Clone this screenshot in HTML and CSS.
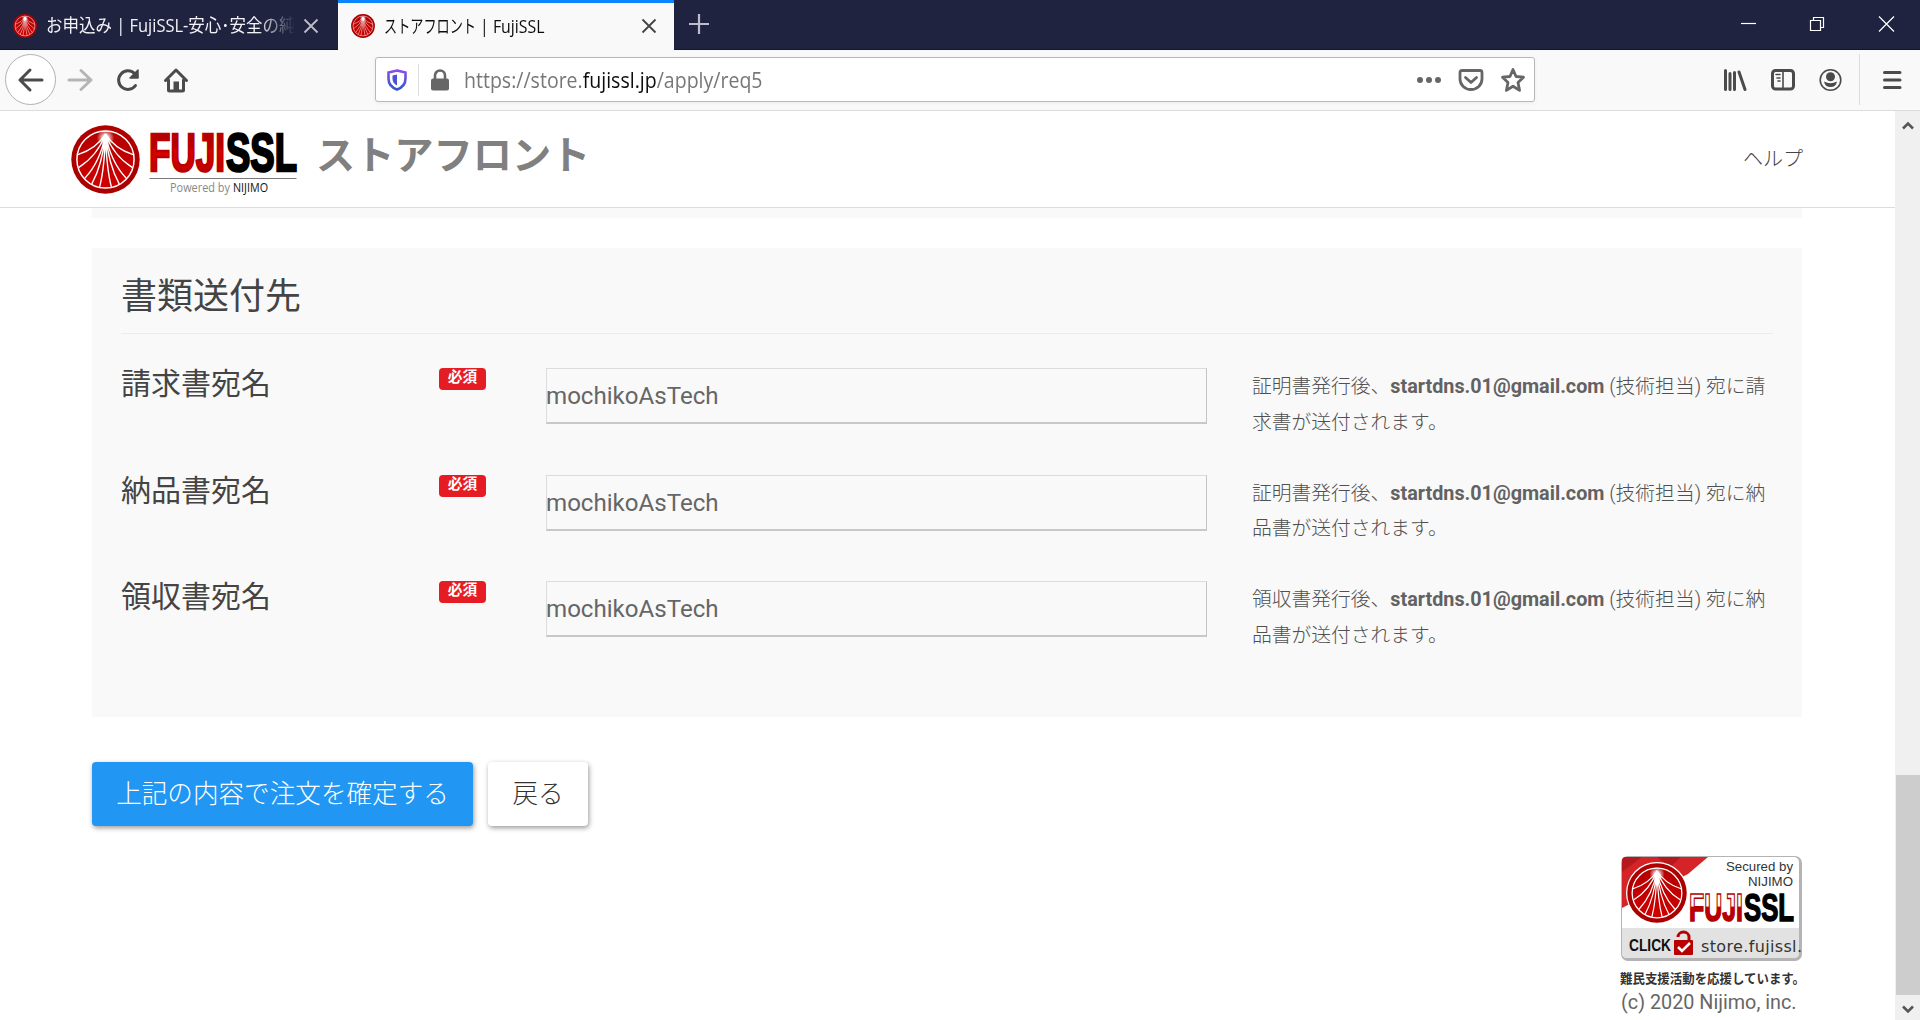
FILE: index.html
```html
<!DOCTYPE html>
<html lang="ja">
<head>
<meta charset="utf-8">
<title>ストアフロント | FujiSSL</title>
<link rel="stylesheet" href="styles.css">
</head>
<body>
<svg class="defs" width="0" height="0">
  <defs>
    <linearGradient id="red" x1="0" y1="0" x2="0" y2="1"><stop offset="0" stop-color="#b00000"/><stop offset="1" stop-color="#a80000"/></linearGradient>
    <linearGradient id="inner" x1="0" y1="0" x2="0" y2="1"><stop offset="0" stop-color="#b40000"/><stop offset="1" stop-color="#d00000"/></linearGradient>
    <linearGradient id="fuji" x1="0" y1="0" x2="0" y2="1"><stop offset="0" stop-color="#b00000"/><stop offset=".42" stop-color="#b80000"/><stop offset=".48" stop-color="#dc0000"/><stop offset="1" stop-color="#b40000"/></linearGradient>
    <linearGradient id="fujis" x1="0" y1="0" x2="0" y2="1"><stop offset="0" stop-color="#fff"/><stop offset=".46" stop-color="#fff"/><stop offset=".47" stop-color="#c00000"/><stop offset="1" stop-color="#b00000"/></linearGradient>
    <linearGradient id="shield" x1="0" y1="0" x2="0" y2="1"><stop offset="0" stop-color="#8a4de8"/><stop offset="1" stop-color="#2f57cf"/></linearGradient>
    <radialGradient id="glow"><stop offset="0" stop-color="#fff"/><stop offset=".3" stop-color="#fff" stop-opacity=".8"/><stop offset="1" stop-color="#fff" stop-opacity="0"/></radialGradient>
    <symbol id="emblem" viewBox="0 0 70 70">
      <circle cx="35" cy="35" r="34.700" fill="url(#red)"/>
      <circle cx="35" cy="35" r="29" fill="url(#inner)" stroke="#fff" stroke-width="1.500"/>
      <g fill="none" stroke="#fff" stroke-width="1.400">
        <path d="M35 9Q26 24 7 30M35 9Q27 31 8 43M35 9Q30 37 14 54M35 9Q32 40 21 60M35 9Q34 44 29 63M35 9Q44 24 63 30M35 9Q43 31 62 43M35 9Q40 37 56 54M35 9Q38 40 49 60M35 9Q36 44 41 63"/>
      </g>
      <circle cx="35" cy="13" r="9" fill="url(#glow)"/>
    </symbol>
  </defs>
</svg>

<div class="tabs">
  <div class="tab">
    <svg class="fav" width="24" height="24"><use href="#emblem"/></svg>
    <span class="tab-title fade"><span class="squeeze s1">お申込み | FujiSSL-安心･安全の純</span></span>
    <svg class="x" width="16" height="16" viewBox="0 0 16 16"><path d="M1.500 1.500l13 13M14.500 1.500l-13 13"/></svg>
  </div>
  <div class="tab active">
    <svg class="fav" width="24" height="24"><use href="#emblem"/></svg>
    <span class="tab-title"><span class="squeeze s2">ストアフロント</span><span class="squeeze s3"> | FujiSSL</span></span>
    <svg class="x" width="16" height="16" viewBox="0 0 16 16"><path d="M1.500 1.500l13 13M14.500 1.500l-13 13"/></svg>
  </div>
  <svg class="plus" width="22" height="22" viewBox="0 0 22 22"><path d="M11 1v20M1 11h20"/></svg>
  <div class="win">
    <svg width="16" height="16" viewBox="0 0 16 16"><path d="M0 7.500h15"/></svg>
    <svg width="16" height="16" viewBox="0 0 16 16"><path d="M.5 4.500h10v10h-10zM3.500 4V1.500h10v10H11"/></svg>
    <svg width="16" height="16" viewBox="0 0 16 16"><path d="M0 .500l15 15M15 .500l-15 15"/></svg>
  </div>
</div>

<div class="toolbar">
  <div class="nav">
    <span class="back"><svg width="26" height="24" viewBox="0 0 26 24"><path d="M24 12H2M12 2L2 12l10 10"/></svg></span>
    <svg class="fwd" width="26" height="24" viewBox="0 0 26 24"><path d="M2 12h22M14 2.500l10 9.500-10 9.500"/></svg>
    <svg class="reload" width="24" height="24" viewBox="0 0 24 24"><path d="M19.500 17.500A9.300 9.300 0 1 1 18.500 5.500L21 8.500"/><path class="tip" d="M22 2v8h-8z"/></svg>
    <svg class="home" width="26" height="26" viewBox="0 0 26 26"><path d="M2.500 13.500L13 3l10.500 10.500M5.500 13v10q0 1 1 1h13q1 0 1-1V13"/><path class="solid" d="M10.500 14.500h5.500V24h-5.500z"/></svg>
  </div>
  <div class="url">
    <svg class="shield" width="20" height="22" viewBox="0 0 20 22"><path d="M10 1.500L18.500 3.500v6c0 5.500-3 9-8.500 11C4.500 18.500 1.500 15 1.500 9.500v-6z" fill="none" stroke="url(#shield)" stroke-width="2.600"/><path d="M10 5.500v11C7 15 5.500 12.500 5.500 10V6.600z" fill="#4b50d8"/></svg>
    <span class="div"></span>
    <svg class="lock" width="20" height="22" viewBox="0 0 20 22"><path d="M5 11V6.500a5 5 0 0 1 10 0V11" fill="none" stroke="#666" stroke-width="2.600"/><rect x="1" y="9.500" width="18" height="12" rx="2" fill="#666"/></svg>
    <span class="address"><span class="squeeze s4">https://store.<b>fujissl.jp</b>/apply/req5</span></span>
    <svg class="dots" width="26" height="8" viewBox="0 0 26 8"><circle cx="4" cy="4" r="3"/><circle cx="13" cy="4" r="3"/><circle cx="22" cy="4" r="3"/></svg>
    <svg class="pocket" width="26" height="24" viewBox="0 0 26 24"><path d="M4 2.500h18q2 0 2 2V11a11 10.500 0 0 1-22 0V4.500q0-2 2-2zM7.500 9.500l5.500 5 5.500-5"/></svg>
    <svg class="star" width="26" height="26" viewBox="0 0 26 26"><path d="M13 2.500l3 7 7.500.700-5.500 5.200 1.600 8L13 19.200l-6.600 4.200 1.600-8L2.500 10.200 10 9.500z"/></svg>
  </div>
  <div class="tools">
    <svg width="26" height="24" viewBox="0 0 26 24"><path d="M3.500 2.500v19M8 5.500v16M12.500 4.500v17M17 4l6 17.500"/></svg>
    <svg width="26" height="24" viewBox="0 0 26 24"><rect x="2.500" y="2.500" width="21" height="18.500" rx="3"/><path class="thin" d="M13 3v18M6 6.500h4M7 10h3M8 13h2"/></svg>
    <svg width="24" height="24" viewBox="0 0 24 24"><circle class="thin" cx="12.500" cy="12" r="10.300"/><circle class="solid" cx="12.500" cy="8.700" r="4.500"/><path class="solid" d="M6 13.500q6.500 3.500 13 0-1 5.500-6.500 5.500t-6.500-5.500z"/></svg>
    <span class="div"></span>
    <svg width="20" height="22" viewBox="0 0 20 22"><path d="M2.500 3.500h15.500M2.500 11h15.500M2.500 18.500h15.500"/></svg>
  </div>
</div>

<div class="view">
  <div class="page">
    <header>
      <svg class="logo" width="228" height="74" viewBox="0 0 228 74">
        <use href="#emblem" width="69" height="69"/>
        <text class="impact" x="78" y="46" textLength="76" lengthAdjust="spacingAndGlyphs" fill="url(#fuji)" stroke="#bb0000">FUJI</text>
        <text class="impact" x="155" y="46" textLength="71" lengthAdjust="spacingAndGlyphs" fill="#000" stroke="#000">SSL</text>
        <path d="M78.500 53.500h147" stroke="#777"/>
        <text class="pow" x="99" y="67" textLength="60" lengthAdjust="spacingAndGlyphs" fill="#888">Powered by</text>
        <text class="pow" x="162" y="67" textLength="35" lengthAdjust="spacingAndGlyphs" fill="#111">NIJIMO</text>
      </svg>
      <h1>ストアフロント</h1>
      <a class="help">ヘルプ</a>
    </header>
    <main>
      <div class="prev"></div>
      <section class="panel">
        <h2>書類送付先</h2>
        <div class="row">
          <label>請求書宛名</label><span class="badge">必須</span>
          <div class="field">mochikoAsTech</div>
          <p>証明書発行後、<b>startdns.01@gmail.com</b> (技術担当) 宛に請<br>求書が送付されます。</p>
        </div>
        <div class="row">
          <label>納品書宛名</label><span class="badge">必須</span>
          <div class="field">mochikoAsTech</div>
          <p>証明書発行後、<b>startdns.01@gmail.com</b> (技術担当) 宛に納<br>品書が送付されます。</p>
        </div>
        <div class="row">
          <label>領収書宛名</label><span class="badge">必須</span>
          <div class="field">mochikoAsTech</div>
          <p>領収書発行後、<b>startdns.01@gmail.com</b> (技術担当) 宛に納<br>品書が送付されます。</p>
        </div>
      </section>
      <div class="actions"><button class="primary">上記の内容で注文を確定する</button><button>戻る</button></div>
      <footer>
        <svg class="seal" width="181" height="131" viewBox="0 0 181 131">
          <clipPath id="card"><rect x="0" y="0" width="181" height="105" rx="7"/></clipPath>
          <g clip-path="url(#card)">
            <rect width="181" height="105" fill="#b4b4b4"/>
            <rect x="1" y="1" width="177" height="101" rx="5" fill="#fff"/>
            <path d="M1 72h177v25q0 5-5 5H6q-5 0-5-5z" fill="#e2e2e2"/>
            <path d="M1 1h86L67 18 1 52z" fill="#d42427"/><path d="M1 1h20L1 16zM36 1h24L48 12z" fill="#b5191d"/>
          </g>
          <circle cx="36" cy="37" r="31" fill="#fff"/>
          <use href="#emblem" x="6" y="7" width="60" height="60"/>
          <text class="arial" x="105" y="15" textLength="67" lengthAdjust="spacingAndGlyphs">Secured by</text>
          <text class="arial" x="127" y="30" textLength="45" lengthAdjust="spacingAndGlyphs">NIJIMO</text>
          <text class="impact sm" x="68" y="65" textLength="54" lengthAdjust="spacingAndGlyphs" fill="url(#fujis)" stroke="#b00000">FUJI</text>
          <text class="impact sm" x="123" y="65" textLength="50" lengthAdjust="spacingAndGlyphs" fill="#000" stroke="#000">SSL</text>
          <text class="click" x="8" y="95" textLength="42" lengthAdjust="spacingAndGlyphs">CLICK</text>
          <path d="M57 81a5 4.500 0 0 1 11 0v4" fill="none" stroke="#b80000" stroke-width="3"/>
          <rect x="53" y="84" width="19" height="15" rx="1" fill="#b80000"/><path d="M57 91l4 4 8-8" fill="none" stroke="#fff" stroke-width="2.500"/>
          <text class="dom" x="80" y="96" textLength="101" lengthAdjust="spacing">store.fujissl.</text>
          <text class="support" x="-1" y="127" textLength="185" lengthAdjust="spacingAndGlyphs">難民支援活動を応援しています。</text>
        </svg>
        <div class="copy">(c) 2020 Nijimo, inc.</div>
      </footer>
    </main>
  </div>
  <div class="scroll">
    <svg width="12" height="12" viewBox="0 0 12 12"><path d="M1 8.500l5-5 5 5"/></svg>
    <div class="thumb"></div>
    <svg width="12" height="12" viewBox="0 0 12 12"><path d="M1 3.500l5 5 5-5"/></svg>
  </div>
</div>
</body>
</html>
```
FILE: styles.css
```css
* { box-sizing: border-box; }
body { margin: 0; width: 1920px; height: 1020px; overflow: hidden; background: #fff; font-family: Roboto, "Noto Sans CJK JP", sans-serif; color: #444; }
svg { display: block; flex: none; overflow: visible; }
.defs { position: absolute; }
.squeeze { display: inline-block; transform-origin: 0 50%; white-space: pre; }

.tabs { display: flex; height: 50px; background: #20233f; border-bottom: 1px solid #13152b; color: #f4f4f8; }
.tab { display: flex; align-items: center; width: 338px; padding: 2px 19px 0 13px; }
.tab.active { width: 336px; height: 50px; background: #f9f9fa; color: #0c0c0d; border-top: 3px solid #0a84ff; padding: 0 17px 1px 13px; }
.tab-title { flex: 1; min-width: 0; display: flex; margin-left: 9px; font: 18px/28px "Open Sans", "Noto Sans CJK JP", sans-serif; overflow: hidden; white-space: nowrap; }
.fade { margin-right: 8px; -webkit-mask-image: linear-gradient(90deg, #000 85%, transparent); mask-image: linear-gradient(90deg, #000 85%, transparent); }
.s1 { transform: scaleX(.915); margin-top: -1px; }
.s2 { transform: scaleX(.73); width: 92px; }
.s3 { transform: scaleX(.88); }
.s4 { transform: scaleX(.93); }
.x path { stroke: #bcbcca; stroke-width: 1.8; }
.active .x path { stroke: #444; }
.plus { margin: 13px 0 0 14px; }
.plus path { stroke: #bcbcca; stroke-width: 2.2; }
.win { display: flex; gap: 53px; margin: 16px 25px 0 auto; }
.win path { fill: none; stroke: #fff; stroke-width: 1.2; }

.toolbar { display: flex; align-items: center; height: 61px; padding-bottom: 1px; background: #f9f9fa; border-bottom: 1px solid #dcdcdc; }
.nav { display: flex; align-items: center; width: 375px; padding-left: 5px; }
.nav svg, .tools svg { fill: none; stroke: #4b4b4c; stroke-width: 3; stroke-linecap: round; stroke-linejoin: round; }
.back { display: flex; align-items: center; justify-content: center; width: 51px; height: 51px; border: 1px solid #b1b1b1; border-radius: 50%; background: #fff; }
.nav .fwd { margin-left: 11px; stroke: #b5b5b6; }
.reload { margin-left: 23px; }
.reload .tip { fill: #4b4b4c; stroke-width: 1.5; }
.home { margin-left: 23px; }
.solid { fill: #4b4b4c; stroke: none; }
.thin { stroke-width: 1.6; }
.url { display: flex; align-items: center; width: 1160px; height: 45px; padding-left: 11px; background: #fff; border: 1px solid #b8b8b9; border-radius: 3px; box-shadow: 0 1px 4px rgba(0,0,0,.06); }
.div { width: 1px; background: #dcdcdc; }
.url .div { height: 32px; margin: 0 11px; }
.address { flex: 1; margin-left: 14px; font: 21px/30px "Open Sans", sans-serif; color: #777; }
.address b { font-weight: 400; color: #0c0c0d; }
.dots { fill: #666; margin-right: 16px; }
.pocket, .star { fill: none; stroke: #666; stroke-width: 2.8; stroke-linejoin: round; stroke-linecap: round; }
.pocket { margin-right: 16px; }
.star { margin-right: 8px; }
.tools { display: flex; align-items: center; margin-left: auto; padding-right: 18px; }
.tools svg + svg { margin-left: 22px; }
.tools .div { height: 51px; margin: 0 22px 0 17px; }

.view { display: flex; height: 909px; }
.page { width: 1895px; }
header { display: flex; height: 97px; padding: 14px 92px 0 71px; border-bottom: 1px solid #dcdcdc; }
.impact { font: 900 54px "Liberation Sans", sans-serif; stroke-width: 2.6; }
.sm { font-size: 38px; stroke-width: 1.5; }
.pow { font: 12px "Open Sans", sans-serif; }
h1 { margin: 2px 0 0 17px; font-size: 39.200px; line-height: 58px; font-weight: 700; color: #808080; }
.help { margin: 22px 0 0 auto; font-size: 20px; line-height: 24px; font-weight: 300; color: #444; }
main { padding: 0 93px 0 92px; }
.prev { height: 10px; background: #f9f9f9; }
.panel { height: 469px; margin-top: 30px; padding: 27px 29px 0 29px; background: #f9f9f9; }
h2 { height: 59px; margin: 0 0 34px; border-bottom: 1px solid #ececec; font-size: 36px; line-height: 44px; font-weight: 400; color: #444; }
.row { display: grid; grid-template-columns: 318px 47px 661px 515px; height: 106.600px; }
label { font-size: 30px; line-height: 32px; color: #444; }
.badge { height: 22px; border-radius: 4px; background: #e51c23; color: #fff; font-size: 14.700px; line-height: 19px; font-weight: 700; text-align: center; }
.field { width: 661px; height: 56px; margin-left: 60px; border: 1px solid #dcdcdc; border-right-color: #c4c4c4; border-bottom: 2px solid #c8c8c8; font-size: 24.100px; line-height: 54px; color: #666; text-indent: -1px; }
.row p { width: 530px; margin: 1px 0 0 105px; font-size: 19.770px; line-height: 35.700px; color: #505050; font-weight: 300; white-space: nowrap; }
.row p b { font-weight: 700; color: #626262; }
.actions { display: flex; gap: 15px; margin-top: 45px; }
button { height: 64px; width: 100px; padding: 0; border: 0; border-radius: 4px; background: #fff; box-shadow: 1px 2px 5px rgba(0,0,0,.4); font: 300 25.600px/61px Roboto, "Noto Sans CJK JP", sans-serif; color: #333; }
.primary { width: 381px; background: #2196f3; color: #fff; }
footer { display: flex; flex-direction: column; width: 181px; margin: 30px 0 0 auto; }
.arial { font: 12.500px "Liberation Sans", sans-serif; fill: #333; }
.click { font: 700 16px "Liberation Sans", sans-serif; fill: #111; }
.dom { font: 16px "DejaVu Sans", sans-serif; fill: #333; }
.support { font: 700 13px "Noto Sans CJK JP", sans-serif; fill: #333; }
.copy { margin-top: 3px; font-size: 19.800px; line-height: 26px; color: #666; white-space: nowrap; }
.scroll { display: flex; flex-direction: column; align-items: center; width: 25px; padding: 9px 0 5px; background: #f0f0f0; }
.scroll path { fill: none; stroke: #555; stroke-width: 2.600; }
.thumb { width: 24px; height: 220px; margin: auto 0 8px; background: #cdcdcd; }
```
